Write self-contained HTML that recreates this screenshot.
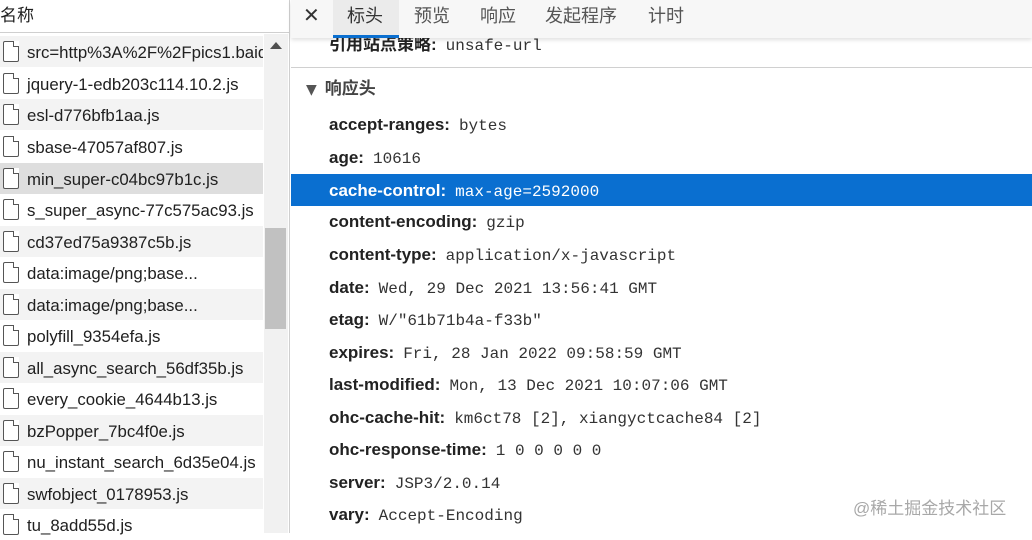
<!DOCTYPE html>
<html><head><meta charset="utf-8"><style>
*{margin:0;padding:0;box-sizing:border-box}
body{width:1032px;height:533px;overflow:hidden;background:#fff;position:relative;font-family:"Liberation Sans","Noto Sans CJK SC",sans-serif;color:#202020}
.left{position:absolute;left:0;top:0;width:290px;height:533px;border-right:1px solid #cfcfcf;background:#fff}
.lh{position:absolute;left:0;top:0;width:289px;height:33px;border-bottom:1px solid #cfcfcf;font-size:17px;line-height:32px;padding-left:0;color:#202020}
.row{position:absolute;left:0;width:263px;height:31px;font-size:16.8px;line-height:33px;padding-left:27px;white-space:nowrap;overflow:hidden}
.row.g{background:#f3f3f3}.row.s{background:#dedede}
.ic{position:absolute;left:3px;top:5px;width:16px;height:21px;border:1.5px solid #555;border-radius:2px;background:#fff}
.ic:after{content:"";position:absolute;right:-1px;top:-1px;width:5px;height:5px;border-left:1.5px solid #555;border-bottom:1.5px solid #555;background:#fff}
.sb{position:absolute;left:264px;top:34px;width:24px;height:499px;background:#f1f1f1}
.th{position:absolute;left:265px;top:228px;width:21px;height:101px;background:#c1c1c1}
.up{position:absolute;left:270px;top:42px;width:0;height:0;border-left:6px solid transparent;border-right:6px solid transparent;border-bottom:7px solid #505050}
.tabs{position:absolute;left:291px;top:0;width:741px;height:38px;background:#f7f7f7;box-shadow:0 2px 4px rgba(0,0,0,.12);z-index:2}
.tab{position:absolute;top:0;height:38px;line-height:33px;font-size:18px;color:#555}
.tab.a{background:#ebebeb;color:#333;border-bottom:3px solid #0a6fd0}
.r{position:absolute;left:291px;width:741px;height:32px;line-height:33px;padding-left:38px;font-size:17px;white-space:nowrap}
.r b{font-weight:bold;color:#222}
.r span{font-family:"Liberation Mono","DejaVu Sans Mono",monospace;font-size:16px;color:#333;margin-left:9px}
.r.sel{background:#0a6fd0;color:#fff}.r.sel b,.r.sel span{color:#fff}
.wm{position:absolute;left:853px;top:494px;font-size:17px;color:#a8a8a8}
</style></head><body>
<div class="left">
<div class="lh">名称</div>
<div class="row g" style="top:36px"><div class="ic"></div>src=http%3A%2F%2Fpics1.baidu.com</div>
<div class="row" style="top:68px"><div class="ic"></div>jquery-1-edb203c114.10.2.js</div>
<div class="row g" style="top:99px"><div class="ic"></div>esl-d776bfb1aa.js</div>
<div class="row" style="top:131px"><div class="ic"></div>sbase-47057af807.js</div>
<div class="row s" style="top:163px"><div class="ic"></div>min_super-c04bc97b1c.js</div>
<div class="row" style="top:194px"><div class="ic"></div>s_super_async-77c575ac93.js</div>
<div class="row g" style="top:226px"><div class="ic"></div>cd37ed75a9387c5b.js</div>
<div class="row" style="top:257px"><div class="ic"></div>data:image/png;base...</div>
<div class="row g" style="top:289px"><div class="ic"></div>data:image/png;base...</div>
<div class="row" style="top:320px"><div class="ic"></div>polyfill_9354efa.js</div>
<div class="row g" style="top:352px"><div class="ic"></div>all_async_search_56df35b.js</div>
<div class="row" style="top:383px"><div class="ic"></div>every_cookie_4644b13.js</div>
<div class="row g" style="top:415px"><div class="ic"></div>bzPopper_7bc4f0e.js</div>
<div class="row" style="top:446px"><div class="ic"></div>nu_instant_search_6d35e04.js</div>
<div class="row g" style="top:478px"><div class="ic"></div>swfobject_0178953.js</div>
<div class="row" style="top:509px"><div class="ic"></div>tu_8add55d.js</div>
<div class="sb"></div><div class="th"></div><div class="up"></div>
</div>
<div class="tabs">
<div class="tab" style="left:12px;font-size:20px;color:#333">✕</div>
<div class="tab a" style="left:42px;width:66px;padding-left:14px">标头</div>
<div class="tab" style="left:123px">预览</div>
<div class="tab" style="left:189px">响应</div>
<div class="tab" style="left:254px">发起程序</div>
<div class="tab" style="left:357px">计时</div>
</div>
<div class="r" style="top:28px"><b>引用站点策略:</b><span>unsafe-url</span></div>
<div style="position:absolute;left:291px;top:67px;width:741px;height:1px;background:#d0d0d0"></div>
<div class="r" style="top:72px;padding-left:15px;color:#444"><span style="font-family:'DejaVu Sans';font-size:14px;margin:0 8px 0 0;color:#555">▼</span><b style="color:#444">响应头</b></div>
<div class="r" style="top:108px"><b>accept-ranges:</b><span>bytes</span></div>
<div class="r" style="top:141px"><b>age:</b><span>10616</span></div>
<div class="r sel" style="top:174px"><b>cache-control:</b><span>max-age=2592000</span></div>
<div class="r" style="top:205px"><b>content-encoding:</b><span>gzip</span></div>
<div class="r" style="top:238px"><b>content-type:</b><span>application/x-javascript</span></div>
<div class="r" style="top:271px"><b>date:</b><span>Wed, 29 Dec 2021 13:56:41 GMT</span></div>
<div class="r" style="top:303px"><b>etag:</b><span>W/"61b71b4a-f33b"</span></div>
<div class="r" style="top:336px"><b>expires:</b><span>Fri, 28 Jan 2022 09:58:59 GMT</span></div>
<div class="r" style="top:368px"><b>last-modified:</b><span>Mon, 13 Dec 2021 10:07:06 GMT</span></div>
<div class="r" style="top:401px"><b>ohc-cache-hit:</b><span>km6ct78 [2], xiangyctcache84 [2]</span></div>
<div class="r" style="top:433px"><b>ohc-response-time:</b><span>1 0 0 0 0 0</span></div>
<div class="r" style="top:466px"><b>server:</b><span>JSP3/2.0.14</span></div>
<div class="r" style="top:498px"><b>vary:</b><span>Accept-Encoding</span></div>
<div class="wm">@稀土掘金技术社区</div>
</body></html>
